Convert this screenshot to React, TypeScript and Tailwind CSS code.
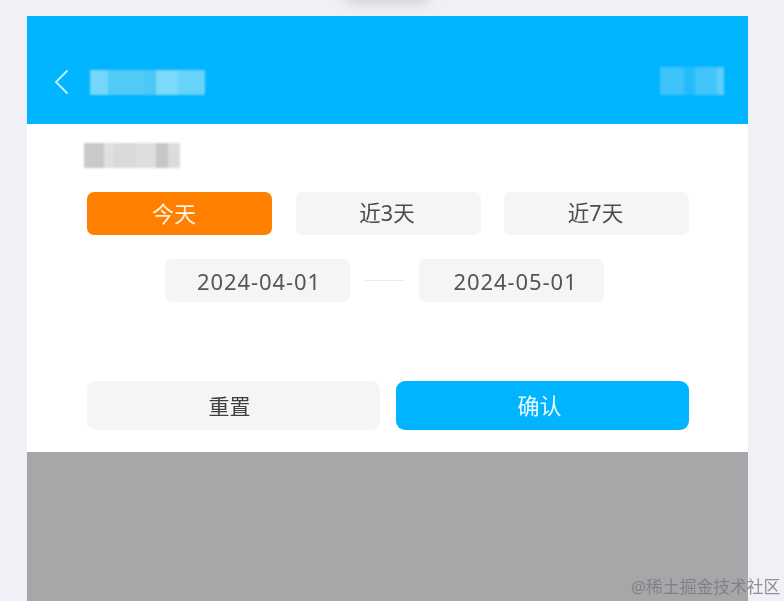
import React from "react";

const font = { fontFamily: '"Noto Sans", "Noto Sans CJK SC", sans-serif' };

function Mosaic({ blocks, className }: { blocks: [number, number, string][]; className: string }) {
  return (
    <div className={`flex items-stretch blur-[1px] ${className}`} aria-hidden>
      {blocks.map(([w, h, c], i) => (
        <div key={i} style={{ width: w, height: h, background: c }} />
      ))}
    </div>
  );
}

export default function App() {
  return (
    <div
      style={font}
      className="relative h-[601px] w-[784px] overflow-hidden bg-[#f0f1f6] pl-[27px] pt-4"
    >
      <div className="absolute left-[345px] top-[-14px] h-[18px] w-[85px] rounded-full bg-[#d2d2d6] blur-[6px]" />
      <div className="flex h-[585px] w-[721px] flex-col blur-[0.4px]">
        <header className="flex h-[108px] shrink-0 items-start justify-between bg-[#00b4ff] pl-[26px] pr-[24px] pt-[51px]">
          <div className="flex items-center gap-[21px] pt-[2px]">
            <svg width="16" height="26" viewBox="0 0 16 26" fill="none">
              <path d="M14 2 L3 13 L14 24" stroke="#bdeeff" strokeWidth="2" strokeLinecap="round" strokeLinejoin="round" />
            </svg>
            <Mosaic
              className="h-[25px]"
              blocks={[
                [18, 25, "#74d7f9"],
                [36, 25, "#52cbf7"],
                [12, 25, "#4ac8f7"],
                [22, 25, "#7cd9f9"],
                [27, 25, "#68d3f8"],
              ]}
            />
          </div>
          <Mosaic
            className="h-[28px]"
            blocks={[
              [24, 28, "#3fc4fa"],
              [11, 28, "#22bcfd"],
              [22, 28, "#42c5fa"],
              [7, 28, "#5fcefa"],
            ]}
          />
        </header>

        <main className="flex h-[328px] shrink-0 flex-col bg-white px-[60px]">
          <Mosaic
            className="ml-[-3px] mt-[19px] h-[25px]"
            blocks={[
              [20, 25, "#c9c9c9"],
              [10, 25, "#e0e0e0"],
              [22, 25, "#d9d9d9"],
              [20, 25, "#dedede"],
              [12, 25, "#c6c6c6"],
              [12, 25, "#dcdcdc"],
            ]}
          />

          <div className="mt-6 flex w-[602px] justify-between">
            <button className="flex h-[43px] w-[185px] items-center justify-center rounded-[7px] bg-[#ff8000] pr-[11px] text-[22px] text-[#fff3e0]">
              今天
            </button>
            <button className="flex h-[43px] w-[185px] items-center justify-center rounded-[7px] bg-[#f5f5f6] pr-[2px] text-[21.5px] text-[#4c4c4e]">
              近3天
            </button>
            <button className="flex h-[43px] w-[185px] items-center justify-center rounded-[7px] bg-[#f5f5f6] pr-[2px] text-[21.5px] text-[#4c4c4e]">
              近7天
            </button>
          </div>

          <div className="mt-6 flex items-center pl-[78px]">
            <div className="flex h-[43px] w-[185px] items-center justify-center rounded-[7px] bg-[#f5f5f6] pl-[3px] pt-[2px] text-[22px] tracking-[0.9px] text-[#555557]">
              2024-04-01
            </div>
            <div className="ml-[15px] mr-[14px] h-px w-[40px] bg-[#ececec]" />
            <div className="flex h-[43px] w-[185px] items-center justify-center rounded-[7px] bg-[#f5f5f6] pl-[8px] pt-[2px] text-[22px] tracking-[0.9px] text-[#555557]">
              2024-05-01
            </div>
          </div>

          <div className="mt-[79px] flex w-[602px] justify-between">
            <button className="flex h-[49px] w-[293px] items-center justify-center rounded-[9px] bg-[#f5f5f6] pr-[8px] pt-[2px] text-[21px] text-[#3f3f41]">
              重置
            </button>
            <button className="flex h-[49px] w-[293px] items-center justify-center rounded-[9px] bg-[#00b4ff] pr-[6px] text-[22px] text-[#eafaff]">
              确认
            </button>
          </div>
        </main>

        <div className="flex-1 bg-[#a6a7a9]" />
      </div>

      <div className="absolute left-[631px] top-[575px] whitespace-nowrap text-[16.8px] leading-[24px] text-[#77787b]/80 blur-[0.5px]">
        @稀土掘金技术社区
      </div>
    </div>
  );
}
